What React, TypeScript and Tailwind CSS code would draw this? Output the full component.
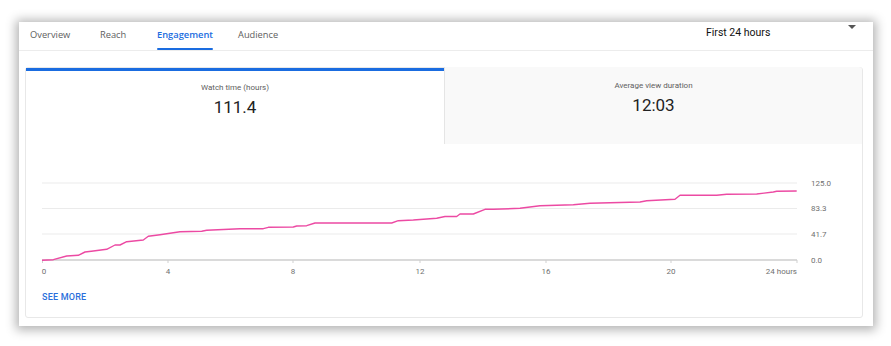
import React from "react";

const pts: [number, number][] = [
  [42, 259.3], [53.3, 258.7], [66.7, 255], [78.3, 254.3], [85, 251], [93.3, 250],
  [106.7, 248.3], [115, 244], [120, 244], [126.7, 240.7], [143.3, 239], [148.3, 235.3],
  [160, 233.7], [173.3, 231.7], [180, 230.7], [201.7, 230.3], [206.7, 229.3], [240, 227.7],
  [263.3, 227.7], [268.3, 226.3], [293.3, 226], [296.7, 225], [306.7, 224.7], [315, 222],
  [391.7, 222], [398.3, 219.7], [413.3, 219], [436.7, 217.3], [445, 215.5], [456.7, 215.5],
  [460, 213], [473.3, 213], [485, 208.3], [493.3, 208.3], [520, 207.3], [540, 204.7],
  [573.3, 203.7], [590, 202.3], [640, 201], [646.7, 199.7], [675, 198.3], [680, 194.3],
  [716.7, 194.3], [726.7, 193.3], [756.7, 193], [773.3, 191], [776.7, 190.3], [796.7, 190],
];

const xTicks: [number, string, "start" | "middle" | "end"][] = [
  [44, "0", "middle"],
  [168, "4", "middle"],
  [293, "8", "middle"],
  [420, "12", "middle"],
  [546, "16", "middle"],
  [671, "20", "middle"],
  [797, "24 hours", "end"],
];

const yTicks: [number, string][] = [
  [182, "125.0"],
  [207.5, "83.3"],
  [233, "41.7"],
  [259, "0.0"],
];

export default function App() {
  return (
    <div className="w-[891px] h-[346px] bg-white pt-[22px] pl-[19px]" style={{ fontFamily: "Roboto, 'Liberation Sans', sans-serif" }}>
      <div className="w-[854px] h-[304px] bg-white shadow-[0_1px_10px_3px_rgba(0,0,0,0.3)] flex flex-col">
        {/* top tabs */}
        <div className="relative h-[29px] border-b border-[#ececec] flex items-stretch pl-[11px]">
          <div className="flex items-stretch text-[9.3px]" style={{ fontFamily: "'Open Sans', 'Noto Sans', sans-serif" }}>
            <div className="w-[70px] flex items-center text-[#606060] pb-[2px]">Overview</div>
            <div className="w-[57px] flex items-center text-[#606060] pb-[2px]">Reach</div>
            <div className="w-[81px] flex items-stretch">
              <div className="relative flex items-center text-[#1a6ce0] font-semibold pb-[2px]">
                Engagement
                <div className="absolute left-0 right-0 bottom-[0px] h-[2px] rounded-full bg-[#1a6ce0]" />
              </div>
            </div>
            <div className="flex items-center text-[#606060] pb-[2px]">Audience</div>
          </div>
          <div className="absolute left-[687px] top-[3px] text-[10.5px] text-[#111]">First 24 hours</div>
          <div className="absolute left-[829px] top-[3px] w-0 h-0 border-l-[4px] border-r-[4px] border-t-[4px] border-l-transparent border-r-transparent border-t-[#555]" />
        </div>
        {/* inner card */}
        <div className="mt-[16px] ml-[6px] w-[838px] h-[251px] border border-[#e8e8e8] rounded-[3px] flex flex-col">
          <div className="flex h-[76px]">
            <div className="w-[418px] border-t-[3px] border-[#1a6ce0] bg-white flex flex-col items-center pt-[11px]">
              <div className="text-[8px] text-[#606060] leading-[12px]">Watch time (hours)</div>
              <div className="text-[17px] text-[#222] leading-[22px] mt-[2px]">111.4</div>
            </div>
            <div className="flex-1 bg-[#f9f9f9] border-l border-[#e5e5e5] rounded-tr-[3px] flex flex-col items-center pt-[13px] -mt-[1px]">
              <div className="text-[8px] text-[#606060] leading-[12px]">Average view duration</div>
              <div className="text-[17px] text-[#222] leading-[22px] mt-[2px]">12:03</div>
            </div>
          </div>
          <svg width="836" height="137" viewBox="26 143 836 137" className="block">
            {yTicks.slice(0, 3).map(([y]) => (
              <line key={y} x1={42} x2={797} y1={y} y2={y} stroke="#ebebeb" strokeWidth={1} />
            ))}
            <line x1={42} x2={797} y1={259} y2={259} stroke="#b5b5b5" strokeWidth={1.2} />
            {xTicks.map(([x]) => (
              <line key={"t" + x} x1={x === 44 ? 42.5 : x} x2={x === 44 ? 42.5 : x} y1={259} y2={262} stroke="#cfcfcf" strokeWidth={1} />
            ))}
            <polyline
              points={pts.map(([x, y]) => `${x},${y}`).join(" ")}
              fill="none"
              stroke="#ec4aa3"
              strokeWidth={1.4}
              strokeLinejoin="round"
            />
            {xTicks.map(([x, label, anchor]) => (
              <text key={"l" + x} x={x} y={273} textAnchor={anchor} fontSize={8} fill="#707070" fontFamily="Roboto, 'Liberation Sans', sans-serif">
                {label}
              </text>
            ))}
            {yTicks.map(([y, label]) => (
              <text key={"y" + y} x={811} y={y + 2.5} fontSize={8} fill="#707070" fontFamily="Roboto, 'Liberation Sans', sans-serif">
                {label}
              </text>
            ))}
          </svg>
          <div className="pl-[16px] mt-[10px] text-[9px] font-medium text-[#2a6fdb] tracking-[0.2px]">SEE MORE</div>
        </div>
      </div>
    </div>
  );
}
